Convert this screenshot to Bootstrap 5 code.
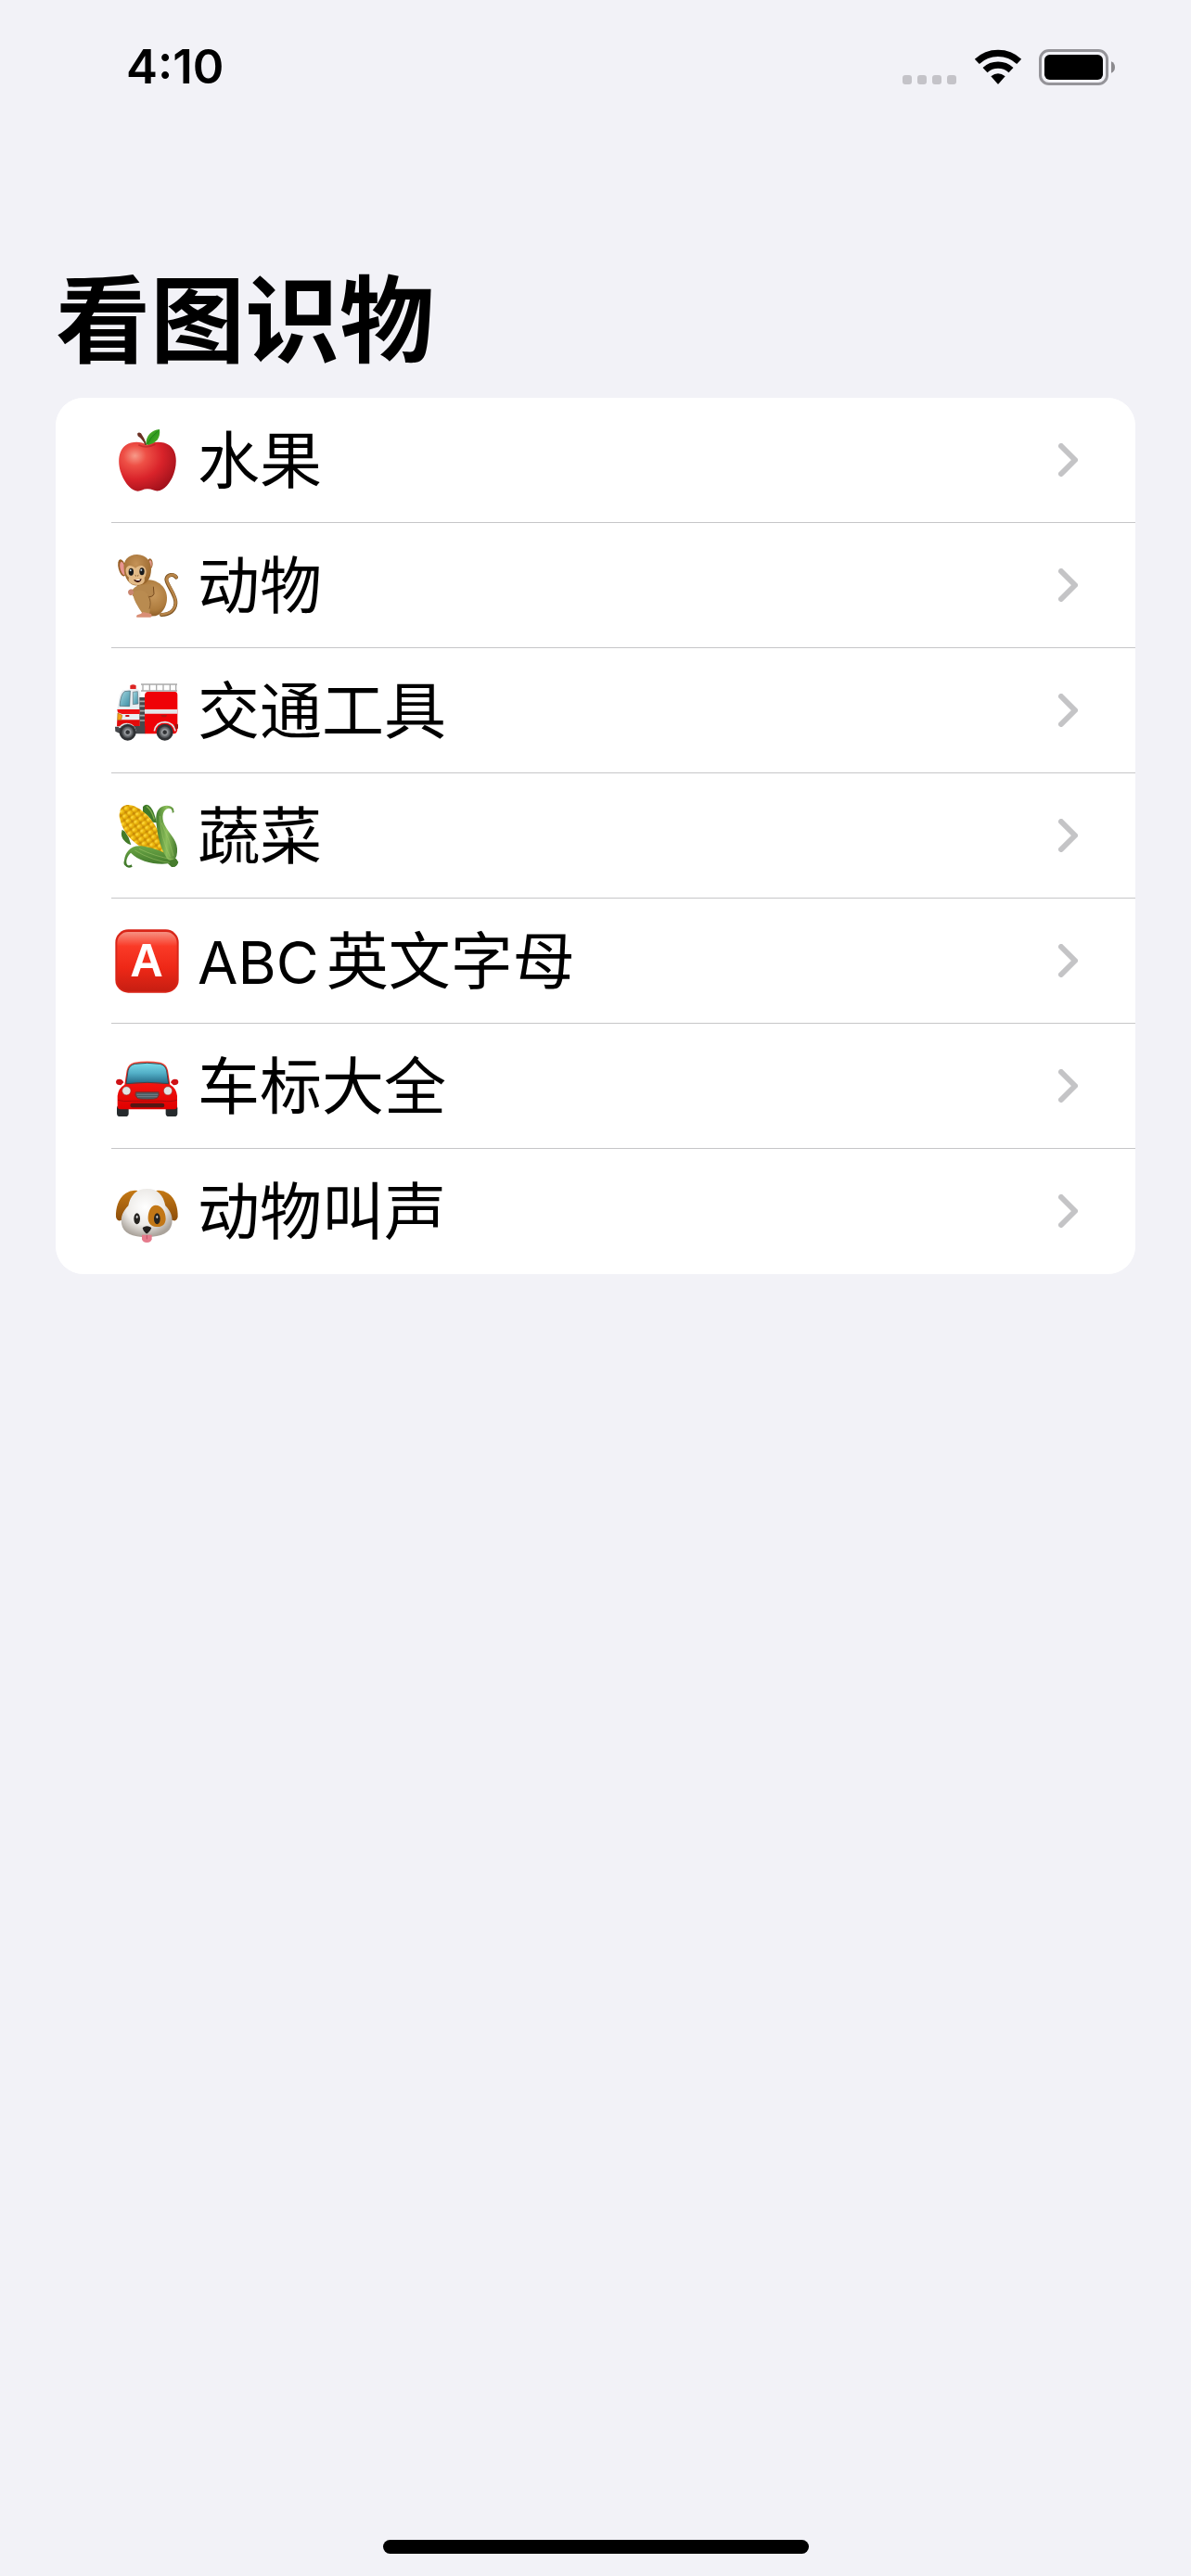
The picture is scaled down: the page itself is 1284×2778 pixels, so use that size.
<!DOCTYPE html>
<html lang="zh-CN">
<head>
<meta charset="utf-8">
<meta name="viewport" content="width=device-width, initial-scale=1">
<title>看图识物</title>
<link href="https://cdn.jsdelivr.net/npm/bootstrap@5.3.0/dist/css/bootstrap.min.css" rel="stylesheet">
<style>
body{background:#f2f2f7;color:#000;font-family:Inter,"Noto Sans CJK SC",sans-serif}
.status-bar{padding:42px 81px 0 136px}
.clock{font-size:51px;line-height:60px;font-weight:600}
.status-icons{gap:18px}
.main-area{padding:184px 60px 0}
.page-title{font-size:102px;line-height:120px;font-weight:700;margin-bottom:23px}
.category-list{border-radius:30px;background:#fff;overflow:hidden}
.category-link{border:0;padding:0 0 0 60px;color:#000;background:#fff}
.category-row{height:135px;padding:0 62px 0 4px;gap:20px;border-bottom:1px solid #c6c6c8}
.category-link:last-child .category-row{border-bottom-color:transparent}
.category-name{font-size:67px;line-height:80px;padding-top:2px}
.latin-part{font-size:63px;margin-right:8px}
.category-row svg{flex:none}
.home-bar{width:459px;height:15px;border-radius:8px;background:#000;margin-bottom:24px}
</style>
</head>
<body>
<div class="d-flex flex-column min-vh-100">
<header class="status-bar d-flex justify-content-between align-items-center">
  <div class="clock">4:10</div>
  <div class="status-icons d-flex align-items-center">
    <svg width="60" height="38" viewBox="0 0 60 38" fill="#c4c3c8" role="img" aria-label="信号"><rect x="1" y="28" width="10" height="10" rx="3"/><rect x="17" y="28" width="10" height="10" rx="3"/><rect x="33" y="28" width="10" height="10" rx="3"/><rect x="49" y="28" width="10" height="10" rx="3"/></svg>
    <svg width="52" height="38" viewBox="299 70 156 114" role="img" aria-label="Wi-Fi"><g fill="none" stroke="#000" stroke-width="22"><path d="M309 110A99.500 99.500 0 0 1 445 110"/><path d="M335 138A62 62 0 0 1 419 138"/></g><path d="M354 158Q377 139 400 158L379 182Q377 184 375 182Z"/></svg>
    <svg width="83" height="39" viewBox="510 69 249 117" role="img" aria-label="电池"><rect x="514.500" y="73.500" width="216" height="108" rx="28" fill="none" stroke="#959499" stroke-width="9"/><rect x="528" y="87" width="189" height="81" rx="17"/><path d="M744 109Q756 114 756 127.500T744 146Z" fill="#8b8a8e"/></svg>
  </div>
</header>
<main class="main-area">
  <h1 class="page-title">看图识物</h1>
  <nav class="list-group category-list" aria-label="看图识物">
    <a href="#" class="list-group-item category-link"><div class="category-row d-flex align-items-center">
      <svg width="69" height="69" viewBox="42 66 207 207" aria-hidden="true">
        <defs><radialGradient id="appleSkin" cx=".28" cy=".28" r=".8"><stop offset="0" stop-color="#f79a89"/><stop offset=".25" stop-color="#ee5046"/><stop offset=".6" stop-color="#d9232a"/><stop offset="1" stop-color="#a4121c"/></radialGradient><linearGradient id="leafGreen" x1="0" y1="0" x2="1" y2="1"><stop offset="0" stop-color="#72c13a"/><stop offset=".5" stop-color="#2f9a1e"/><stop offset="1" stop-color="#5cb52f"/></linearGradient></defs>
        <path d="M145 119C126 107 96 107 77 120C54 137 50 172 59 203C68 234 89 263 109 268C124 272 132 261 147 262C162 261 171 272 187 267C211 259 229 229 236 199C243 168 240 137 218 121C199 107 164 108 145 119Z" fill="url(#appleSkin)"/>
        <path d="M118 119Q145 133 172 117" fill="none" stroke="#a0131b" stroke-width="5" opacity=".45"/>
        <path d="M114 83Q119 77 126 82Q137 97 145 120L139 119Q131 101 116 91Z" fill="#6b3022"/>
        <path d="M142 118C142 89 160 71 186 69C190 97 175 114 151 119Z" fill="url(#leafGreen)"/><path d="M147 116Q158 91 180 76" fill="none" stroke="#20841a" stroke-width="3"/>
      </svg><span class="category-name flex-grow-1">水果</span>
      <svg width="21" height="36" viewBox="0 0 21 36" fill="none" stroke="#c4c4c6" stroke-width="6" stroke-linecap="round" stroke-linejoin="round" aria-hidden="true"><path d="M3 3L18 18L3 33"/></svg></div></a>
    <a href="#" class="list-group-item category-link"><div class="category-row d-flex align-items-center">
      <svg width="69" height="69" viewBox="42 51 207 207" aria-hidden="true">
        <defs><radialGradient id="furBody" cx=".6" cy=".4" r=".65"><stop offset="0" stop-color="#c99a5e"/><stop offset=".65" stop-color="#ae7c3e"/><stop offset="1" stop-color="#855521"/></radialGradient><radialGradient id="furHead" cx=".45" cy=".3" r=".7"><stop offset="0" stop-color="#c49257"/><stop offset="1" stop-color="#966329"/></radialGradient></defs>
        <path d="M240 128C232 115 211 118 208 134C207 150 241 186 238 212C236 235 219 248 192 249" fill="none" stroke="#7b5221" stroke-width="12" stroke-linecap="round"/><path d="M240 127C232 115 212 119 209 134C209 150 242 186 238 212C235 234 217 247 192 248" fill="none" stroke="#b88549" stroke-width="8" stroke-linecap="round"/>
        <path d="M119 145C150 126 185 138 202 165C219 195 207 232 184 248Q172 256 145 253L132 235L99 186Z" fill="url(#furBody)"/>
        <path d="M124 153Q105 156 96 172L100 187Q117 183 143 189Q163 193 167 184Q170 172 157 149Z" fill="#b5874d"/>
        <path d="M143 190Q164 194 168 181L166 158" fill="none" stroke="#75491e" stroke-width="3"/>
        <path d="M101 187Q97 178 111 171Q137 165 151 188Q160 201 158 218L152 253L132 247Q103 206 101 187Z" fill="#b98b50"/><path d="M150 188Q161 207 153 230" fill="none" stroke="#8b5e2c" stroke-width="3"/>
        <path d="M133 240Q126 247 115 249Q109 251 112 257H156Q164 256 159 246Z" fill="#d98e75"/><path d="M97 166Q84 166 84 177Q87 188 92 186Q99 187 103 176Z" fill="#c98670"/>
        <ellipse cx="65" cy="97" rx="12" ry="28" fill="#986027" transform="rotate(-14 65 97)"/><ellipse cx="67" cy="99" rx="8" ry="22" fill="#e89490" transform="rotate(-14 67 99)"/><ellipse cx="155" cy="84" rx="9" ry="17" fill="#9d6730"/><ellipse cx="156" cy="85" rx="5" ry="12" fill="#e49b90"/>
        <path d="M71 101C67 72 87 53 114 54C144 55 159 77 159 103C158 131 147 151 119 154C91 158 72 132 71 101Z" fill="url(#furHead)"/>
        <path d="M77 109C75 91 91 83 108 98C124 83 143 90 143 111Q142 124 137 129Q141 149 122 152Q105 155 92 147Q83 140 87 128Q78 122 77 109Z" fill="#e2ba87"/>
        <ellipse cx="94" cy="110" rx="8" ry="12" fill="#17191b"/><ellipse cx="129" cy="109" rx="8" ry="12" fill="#17191b"/><circle cx="92" cy="105" r="3" fill="#c9ddeb"/><circle cx="127" cy="104" r="3" fill="#c9ddeb"/>
        <path d="M107 121L111 124M118 121L114 124" stroke="#795022" stroke-width="3"/><path d="M102 135Q114 138 128 132Q125 145 114 144Q105 143 102 135Z" fill="#381009"/><path d="M108 136L124 134L121 138H111Z" fill="#fff"/>
      </svg><span class="category-name flex-grow-1">动物</span>
      <svg width="21" height="36" viewBox="0 0 21 36" fill="none" stroke="#c4c4c6" stroke-width="6" stroke-linecap="round" stroke-linejoin="round" aria-hidden="true"><path d="M3 3L18 18L3 33"/></svg></div></a>
    <a href="#" class="list-group-item category-link"><div class="category-row d-flex align-items-center">
      <svg width="69" height="69" viewBox="42 51 207 207" aria-hidden="true">
        <defs><linearGradient id="truckGlass" x1="0" y1="0" x2="1" y2="1"><stop offset="0" stop-color="#a7d9e2"/><stop offset="1" stop-color="#3b8da4"/></linearGradient><radialGradient id="hub"><stop offset="0" stop-color="#55585c"/><stop offset=".35" stop-color="#bfc1c5"/><stop offset=".65" stop-color="#74777b"/><stop offset="1" stop-color="#45484b"/></radialGradient></defs>
        <path d="M126 69H243M126 90H243M132 69V91M154 69V91M176 69V91M198 69V91M220 69V91M239 69V91" stroke="#aaa" stroke-width="4"/>
        <path d="M91 84V73Q100 67 110 73V85Z" fill="#dc2523"/><path d="M67 88L111 84Q123 86 124 98V203H49V150L55 114Q59 95 67 88Z" fill="#e9eef2"/>
        <path d="M121 111H140V210H121Z" fill="#45484b"/><path d="M121 124H140M121 139H140M121 155H140M121 170H140M121 186H140" stroke="#a5a8a9" stroke-width="5"/>
        <path d="M138 104Q139 94 149 93H236Q244 94 244 104V211Q244 229 232 229H138Z" fill="#ef0207"/><path d="M138 150H244V164H138Z" fill="#e4e5e8"/><path d="M189 168H210L207 175H195Z" fill="#ae1712"/>
        <path d="M57 139Q60 101 73 92L91 90L89 140Z" fill="url(#truckGlass)" stroke="#43616b" stroke-width="2"/><path d="M100 94L115 92L117 132L100 134Z" fill="url(#truckGlass)" stroke="#63737b" stroke-width="2"/>
        <path d="M49 150H122V165H65L51 160Z" fill="#ef0f12"/><path d="M49 184H122V205H48Z" fill="#e30b0b"/><path d="M76 171H88" stroke="#c7171a" stroke-width="6"/><path d="M51 162L65 169L62 184H50Z" fill="#f8a315" stroke="#a86f17" stroke-width="2"/>
        <path d="M42 206H63L105 204H139V229H59L43 221Z" fill="#45484c"/><path d="M53 211Q64 192 86 195Q106 197 110 220L101 222Q91 203 70 207Z" fill="#dfe3e5"/><path d="M169 220Q175 191 204 191Q231 193 237 220" fill="none" stroke="#dfe3e5" stroke-width="5"/><rect x="236" y="197" width="10" height="16" rx="3" fill="#a31512"/>
        <circle cx="83" cy="224" r="27" fill="#303235"/><circle cx="83" cy="224" r="19" fill="url(#hub)"/><circle cx="83" cy="224" r="8" fill="#303235" stroke="#a9acaf" stroke-width="2"/><circle cx="203" cy="224" r="27" fill="#303235"/><circle cx="203" cy="224" r="19" fill="url(#hub)"/><circle cx="203" cy="224" r="8" fill="#303235" stroke="#a9acaf" stroke-width="2"/>
      </svg><span class="category-name flex-grow-1">交通工具</span>
      <svg width="21" height="36" viewBox="0 0 21 36" fill="none" stroke="#c4c4c6" stroke-width="6" stroke-linecap="round" stroke-linejoin="round" aria-hidden="true"><path d="M3 3L18 18L3 33"/></svg></div></a>
    <a href="#" class="list-group-item category-link"><div class="category-row d-flex align-items-center">
      <svg width="69" height="69" viewBox="42 51 207 207" aria-hidden="true">
        <defs><linearGradient id="husk" x1="0" y1="0" x2="1" y2="0"><stop offset="0" stop-color="#417c2c"/><stop offset=".5" stop-color="#8dbf5b"/><stop offset="1" stop-color="#44792e"/></linearGradient><linearGradient id="lowerHusk" x1="0" y1="0" x2="0" y2="1"><stop offset="0" stop-color="#6da747"/><stop offset="1" stop-color="#3b7327"/></linearGradient><pattern id="kernels" width="19" height="18" patternUnits="userSpaceOnUse" patternTransform="rotate(-35)"><rect width="19" height="18" fill="#c88a08"/><ellipse cx="9" cy="9" rx="9" ry="8" fill="#eab40c"/><ellipse cx="7" cy="7" rx="5" ry="4" fill="#fcd535"/></pattern></defs>
        <path d="M132 60Q145 46 158 62Q169 76 177 112L164 110Q149 85 132 78Z" fill="#3e792a"/><path d="M144 59Q160 69 169 101" fill="none" stroke="#83af4f" stroke-width="4"/>
        <path d="M65 134Q57 158 76 174Q87 184 94 183L86 160L74 140Z" fill="#437b29"/>
        <path d="M58 77C59 53 89 48 112 62C145 77 184 125 194 176L208 219L163 210C111 188 70 151 59 104C56 95 54 86 58 77Z" fill="url(#kernels)"/>
        <path d="M72 233C75 206 94 183 127 187C173 193 208 211 240 229L247 239Q242 257 225 255L213 244C170 249 119 236 93 209C80 221 75 239 82 248Q88 252 95 247L98 254Q83 262 74 250Q68 245 72 233Z" fill="url(#lowerHusk)"/>
        <path d="M233 78L231 66Q218 51 195 59C174 68 173 93 176 117C180 154 188 190 207 222Q214 237 231 234Q245 224 243 195C241 165 215 145 202 118C191 91 197 69 215 65Q228 65 227 80Z" fill="url(#husk)"/>
        <path d="M187 90Q190 160 220 222M192 112Q218 164 231 219M106 201Q163 236 232 243M120 196Q169 220 231 231" fill="none" stroke="#a5c96d" stroke-width="3" opacity=".5"/><path d="M217 235L239 229L246 240L234 255L220 247Z" fill="#477c2d"/>
      </svg><span class="category-name flex-grow-1">蔬菜</span>
      <svg width="21" height="36" viewBox="0 0 21 36" fill="none" stroke="#c4c4c6" stroke-width="6" stroke-linecap="round" stroke-linejoin="round" aria-hidden="true"><path d="M3 3L18 18L3 33"/></svg></div></a>
    <a href="#" class="list-group-item category-link"><div class="category-row d-flex align-items-center">
      <svg width="69" height="69" viewBox="42 51 207 207" aria-hidden="true">
        <defs><linearGradient id="redTile" x1="0" y1="0" x2="0" y2="1"><stop offset="0" stop-color="#f69182"/><stop offset=".24" stop-color="#fa3a27"/><stop offset=".6" stop-color="#ee2817"/><stop offset="1" stop-color="#c71e12"/></linearGradient></defs>
        <rect x="43" y="52" width="205" height="205" rx="42" fill="#d92518"/><rect x="49" y="60" width="193" height="192" rx="35" fill="url(#redTile)"/><text x="144" y="203" text-anchor="middle" font-family="Liberation Sans" font-size="148" font-weight="700" fill="#fff">A</text>
      </svg><span class="category-name flex-grow-1"><span class="latin-part">ABC</span>英文字母</span>
      <svg width="21" height="36" viewBox="0 0 21 36" fill="none" stroke="#c4c4c6" stroke-width="6" stroke-linecap="round" stroke-linejoin="round" aria-hidden="true"><path d="M3 3L18 18L3 33"/></svg></div></a>
    <a href="#" class="list-group-item category-link"><div class="category-row d-flex align-items-center">
      <svg width="69" height="69" viewBox="42 51 207 207" aria-hidden="true">
        <defs><linearGradient id="windshield" x1="0" y1="0" x2="0" y2="1"><stop offset="0" stop-color="#7cdcea"/><stop offset=".5" stop-color="#52aec6"/><stop offset="1" stop-color="#236884"/></linearGradient><linearGradient id="carPaint" x1="0" y1="0" x2="0" y2="1"><stop offset="0" stop-color="#ff5040"/><stop offset=".35" stop-color="#f51712"/><stop offset="1" stop-color="#e00000"/></linearGradient></defs>
        <rect x="48" y="216" width="38" height="36" rx="10" fill="#252a2d"/><rect x="206" y="216" width="38" height="36" rx="10" fill="#252a2d"/>
        <path d="M45 141Q45 131 56 131Q67 132 70 142L61 151Q46 151 45 141ZM247 141Q247 131 236 131Q225 132 222 142L231 151Q246 151 247 141Z" fill="#ce1116"/>
        <path d="M73 149L80 103Q84 82 104 77Q146 70 189 77Q209 82 213 103L220 149Q240 160 243 185V219Q243 229 233 229H60Q50 229 50 219V185Q53 160 73 149Z" fill="url(#carPaint)"/>
        <path d="M78 146L84 104Q88 86 106 82Q146 76 187 82Q205 86 209 104L215 146Q147 138 78 146Z" fill="url(#windshield)" stroke="#3c4448" stroke-width="3"/>
        <circle cx="79" cy="169" r="14" fill="#e1e3e3" stroke="#a02722" stroke-width="2"/><circle cx="213" cy="169" r="14" fill="#e1e3e3" stroke="#a02722" stroke-width="2"/>
        <path d="M109 173H183Q187 184 178 193Q171 197 146 197Q120 197 114 193Q104 184 109 173Z" fill="#4c5b61" stroke="#8b2721" stroke-width="3"/><path d="M112 181H181M114 188H179" stroke="#85939a" stroke-width="2"/>
        <path d="M51 199Q69 205 97 202H195Q225 205 242 199" fill="none" stroke="#a90b0b" stroke-width="3"/><rect x="91" y="209" width="111" height="14" rx="7" fill="#551613"/>
      </svg><span class="category-name flex-grow-1">车标大全</span>
      <svg width="21" height="36" viewBox="0 0 21 36" fill="none" stroke="#c4c4c6" stroke-width="6" stroke-linecap="round" stroke-linejoin="round" aria-hidden="true"><path d="M3 3L18 18L3 33"/></svg></div></a>
    <a href="#" class="list-group-item category-link"><div class="category-row d-flex align-items-center">
      <svg width="69" height="69" viewBox="252 111 207 207" aria-hidden="true">
        <defs><radialGradient id="dogFace" cx=".47" cy=".38" r=".62"><stop offset="0" stop-color="#fff"/><stop offset=".6" stop-color="#edebe8"/><stop offset="1" stop-color="#aaa39b"/></radialGradient><linearGradient id="dogEar" x1="0" y1="0" x2="0" y2="1"><stop offset="0" stop-color="#c57914"/><stop offset="1" stop-color="#8d4e0b"/></linearGradient></defs>
        <path d="M326 147Q305 143 286 156C262 173 254 204 255 232Q258 246 268 244C286 242 298 211 300 185Q307 161 326 147Z" fill="url(#dogEar)"/><path d="M384 147Q405 143 424 156C448 173 456 204 455 232Q452 246 442 244C424 242 412 211 410 185Q403 161 384 147Z" fill="url(#dogEar)"/>
        <path d="M355 141C391 141 409 163 415 196C431 212 440 231 436 254C430 284 404 296 355 297C307 297 278 284 273 254C269 231 279 212 295 196C301 163 321 141 355 141Z" fill="url(#dogFace)"/>
        <path d="M339 290H371V304Q369 315 355 315Q341 315 339 304Z" fill="#e57b8c"/><path d="M355 291V304" stroke="#bf5367" stroke-width="3"/>
        <path d="M383 194C404 194 416 215 416 239C415 256 404 266 385 264C367 263 357 249 359 230C361 209 370 194 383 194Z" fill="#c27716"/>
        <ellipse cx="323" cy="238" rx="10" ry="18" fill="#252320"/><ellipse cx="388" cy="238" rx="10" ry="18" fill="#252320"/><ellipse cx="323" cy="232" rx="3" ry="5" fill="#d1d1d1"/><ellipse cx="388" cy="232" rx="3" ry="5" fill="#c9c7c4"/>
        <path d="M341 267Q355 256 370 267Q368 276 358 284Q355 287 351 284Q342 277 341 267Z" fill="#211e1d"/>
      </svg><span class="category-name flex-grow-1">动物叫声</span>
      <svg width="21" height="36" viewBox="0 0 21 36" fill="none" stroke="#c4c4c6" stroke-width="6" stroke-linecap="round" stroke-linejoin="round" aria-hidden="true"><path d="M3 3L18 18L3 33"/></svg></div></a>
  </nav>
</main>
<footer class="mt-auto d-flex justify-content-center"><div class="home-bar"></div></footer>
</div>
<script src="https://cdn.jsdelivr.net/npm/bootstrap@5.3.0/dist/js/bootstrap.bundle.min.js"></script>
</body>
</html>
